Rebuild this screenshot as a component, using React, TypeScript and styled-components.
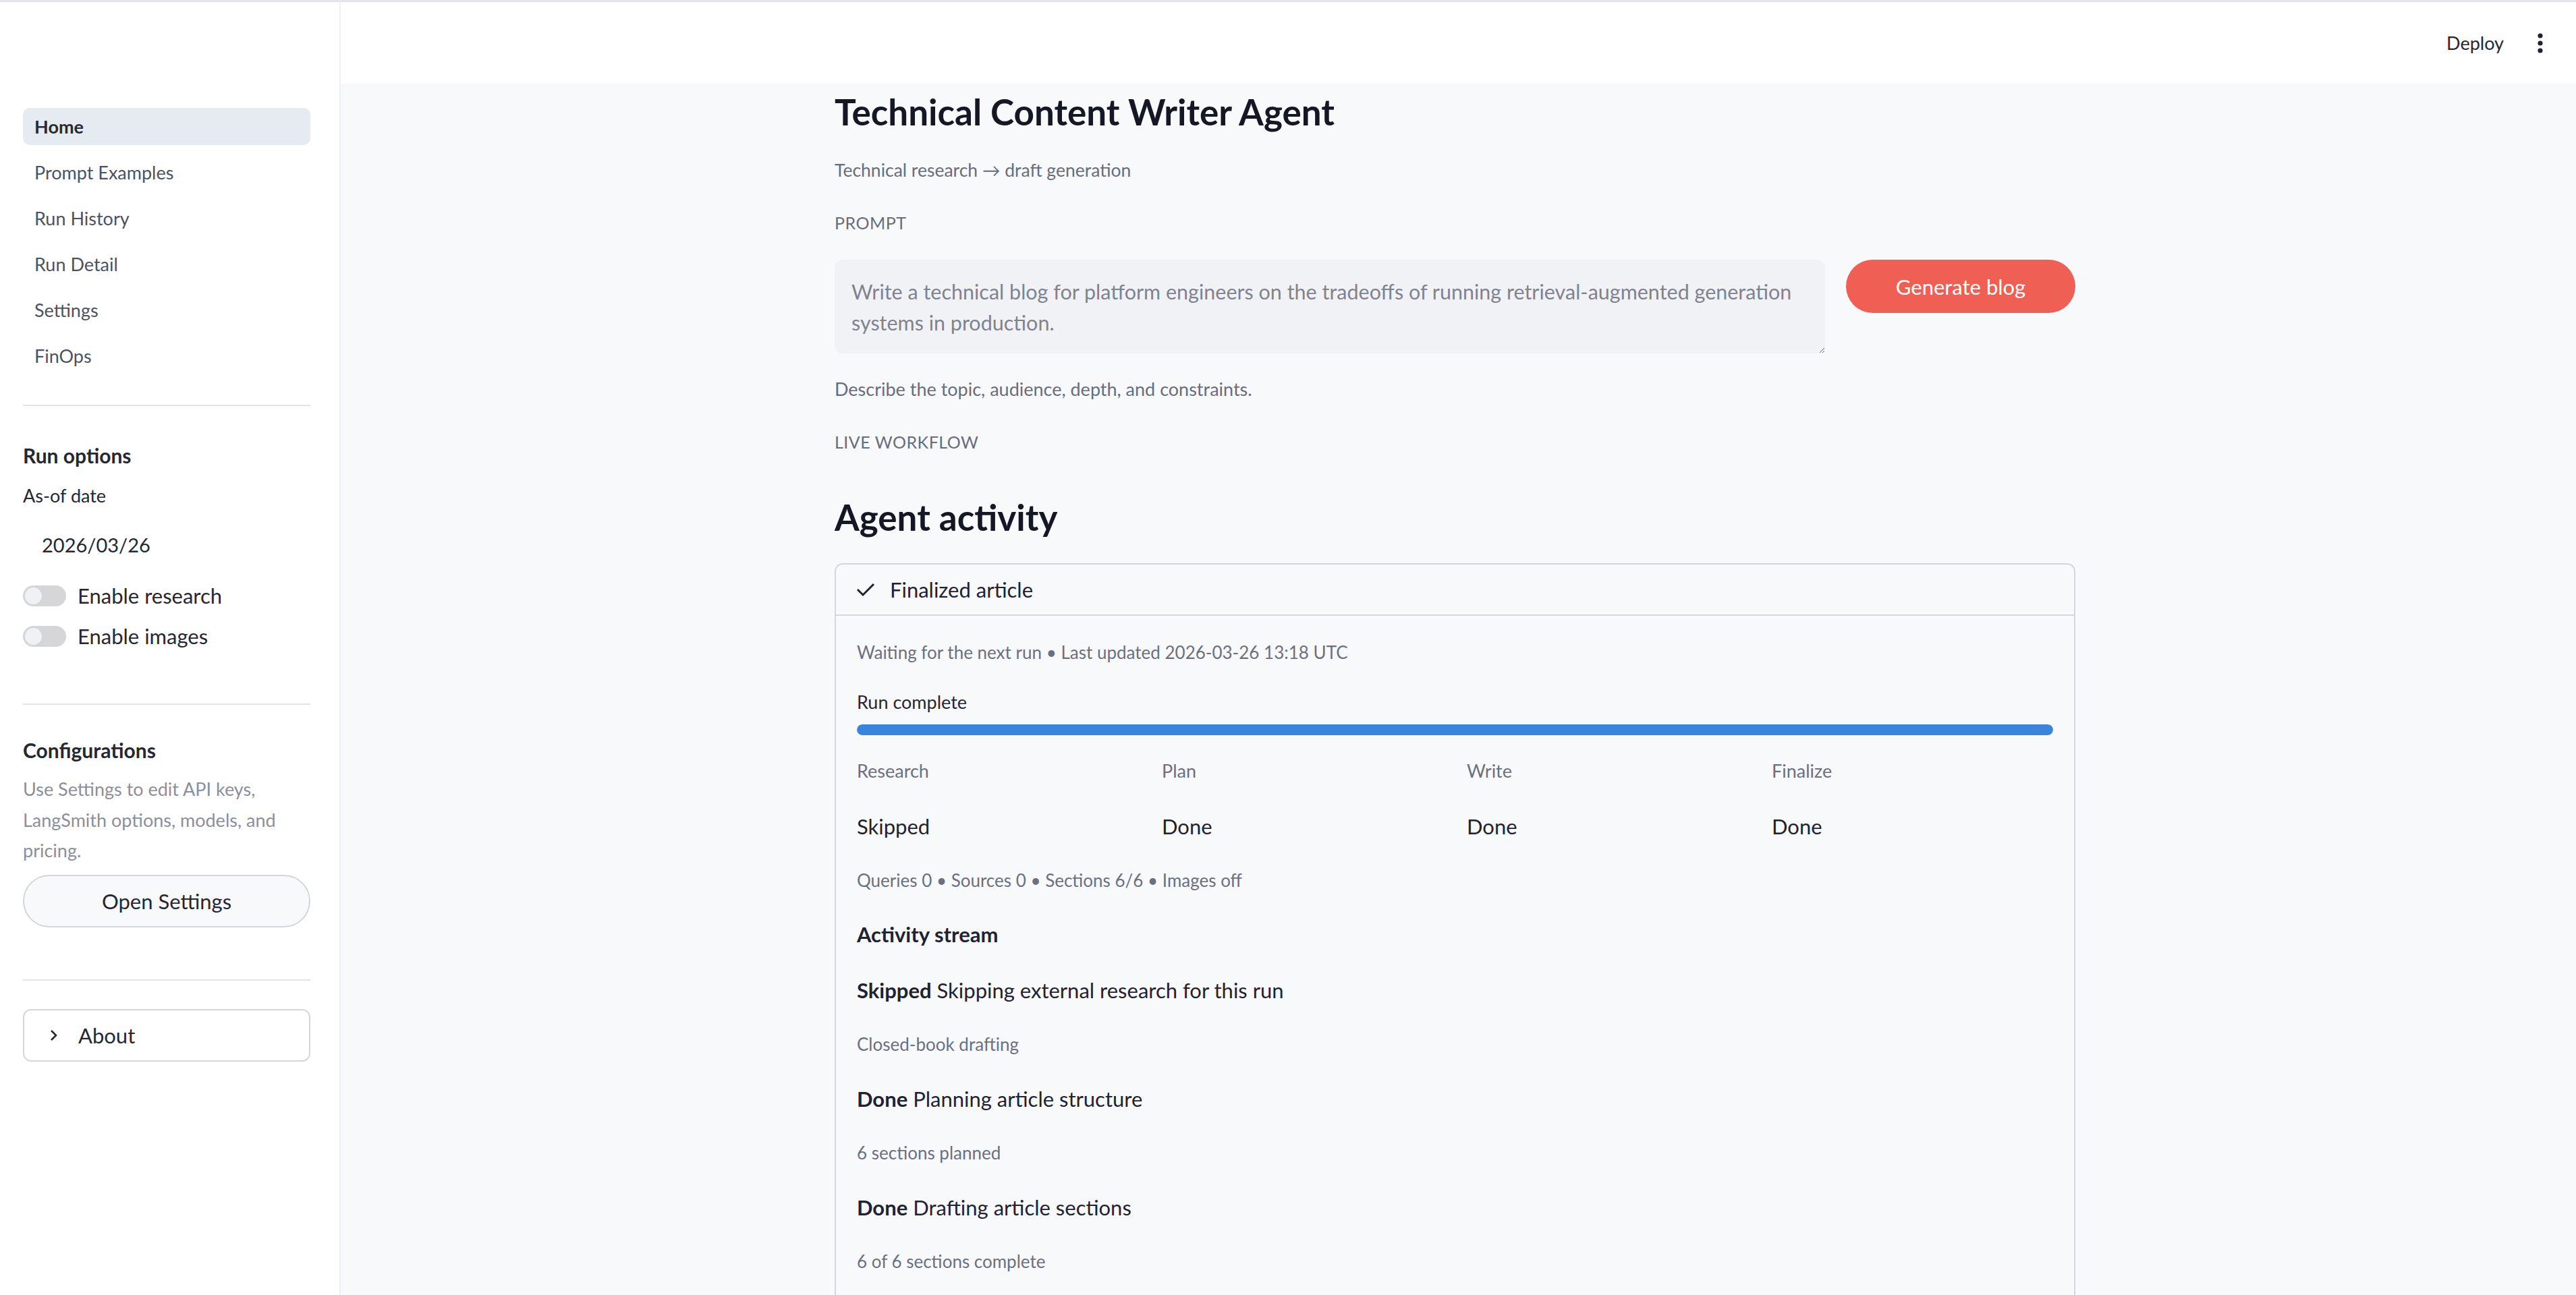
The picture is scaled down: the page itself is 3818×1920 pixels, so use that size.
import React from 'react'
import styled, { createGlobalStyle } from 'styled-components'

const GlobalStyle = createGlobalStyle`
  html, body {
    margin: 0;
    padding: 0;
  }
  body {
    font-family: Lato, "Liberation Sans", sans-serif;
    background: #f8f9fb;
    color: #1f2230;
  }
  * {
    box-sizing: border-box;
  }
`

const NAV_ITEMS = ['Home', 'Prompt Examples', 'Run History', 'Run Detail', 'Settings', 'FinOps']

const STAGES = [
  { name: 'Research', status: 'Skipped' },
  { name: 'Plan', status: 'Done' },
  { name: 'Write', status: 'Done' },
  { name: 'Finalize', status: 'Done' },
]

const ACTIVITY = [
  { tag: 'Skipped', text: 'Skipping external research for this run', note: 'Closed-book drafting' },
  { tag: 'Done', text: 'Planning article structure', note: '6 sections planned' },
  { tag: 'Done', text: 'Drafting article sections', note: '6 of 6 sections complete' },
]

const PROMPT_TEXT =
  'Write a technical blog for platform engineers on the tradeoffs of running retrieval-augmented generation systems in production.'

const App: React.FC = () => {
  return (
    <>
      <GlobalStyle />
      <Shell>
        <TopLine />
        <Frame>
          <Sidebar>
            <Nav>
              {NAV_ITEMS.map((item, i) => (
                <NavItem key={item} $active={i === 0}>
                  {item}
                </NavItem>
              ))}
            </Nav>
            <Divider $mt={45} />
            <SideHeading $mt={51}>Run options</SideHeading>
            <FieldLabel>As-of date</FieldLabel>
            <DateValue>2026/03/26</DateValue>
            <ToggleRow $mt={37}>
              <Toggle>
                <Knob />
              </Toggle>
              <ToggleLabel>Enable research</ToggleLabel>
            </ToggleRow>
            <ToggleRow $mt={28}>
              <Toggle>
                <Knob />
              </Toggle>
              <ToggleLabel>Enable images</ToggleLabel>
            </ToggleRow>
            <Divider $mt={84} />
            <SideHeading $mt={45}>Configurations</SideHeading>
            <SideNote>
              Use Settings to edit API keys,
              <br />
              LangSmith options, models, and
              <br />
              pricing.
            </SideNote>
            <PillButton>Open Settings</PillButton>
            <Divider $mt={77} />
            <AboutBox>
              <svg width="12" height="18" viewBox="0 0 12 18">
                <polyline points="2,2 9,9 2,16" fill="none" stroke="#262730" strokeWidth="2.6" />
              </svg>
              <span>About</span>
            </AboutBox>
          </Sidebar>

          <Main>
            <Header>
              <DeployLink>Deploy</DeployLink>
              <svg width="10" height="32" viewBox="0 0 10 32">
                <circle cx="5" cy="5" r="3.6" fill="#1f2230" />
                <circle cx="5" cy="16" r="3.6" fill="#1f2230" />
                <circle cx="5" cy="27" r="3.6" fill="#1f2230" />
              </svg>
            </Header>

            <Content>
              <Title $mt={6}>Technical Content Writer Agent</Title>
              <Subtitle>Technical research → draft generation</Subtitle>
              <Eyebrow $mt={40}>PROMPT</Eyebrow>
              <PromptRow>
                <PromptBox readOnly defaultValue={PROMPT_TEXT} />
                <PrimaryButton>Generate blog</PrimaryButton>
              </PromptRow>
              <Hint>Describe the topic, audience, depth, and constraints.</Hint>
              <Eyebrow $mt={40}>LIVE WORKFLOW</Eyebrow>
              <Title $mt={58}>Agent activity</Title>

              <Expander>
                <ExpanderHeader>
                  <svg width="28" height="22" viewBox="0 0 28 22">
                    <polyline points="2,11 10,19 26,3" fill="none" stroke="#1f2230" strokeWidth="3" />
                  </svg>
                  <span>Finalized article</span>
                </ExpanderHeader>
                <ExpanderBody>
                  <Caption $mt={0}>Waiting for the next run • Last updated 2026-03-26 13:18 UTC</Caption>
                  <ProgressLabel>Run complete</ProgressLabel>
                  <ProgressTrack>
                    <ProgressFill $value={100} />
                  </ProgressTrack>
                  <StageGrid>
                    {STAGES.map((stage) => (
                      <Stage key={stage.name}>
                        <StageName>{stage.name}</StageName>
                        <StageStatus>{stage.status}</StageStatus>
                      </Stage>
                    ))}
                  </StageGrid>
                  <Caption $mt={38}>Queries 0 • Sources 0 • Sections 6/6 • Images off</Caption>
                  <StreamTitle>Activity stream</StreamTitle>
                  {ACTIVITY.map((row, i) => (
                    <React.Fragment key={i}>
                      <StreamRow>
                        <b>{row.tag}</b> {row.text}
                      </StreamRow>
                      <Caption $mt={38}>{row.note}</Caption>
                    </React.Fragment>
                  ))}
                </ExpanderBody>
              </Expander>
            </Content>
          </Main>
        </Frame>
      </Shell>
    </>
  )
}

const Shell = styled.div`
  display: flex;
  flex-direction: column;
  height: 1920px;
  overflow: hidden;
`
const TopLine = styled.div`
  height: 3px;
  flex: none;
  background: #e3e4ef;
`
const Frame = styled.div`
  display: flex;
  flex: 1;
  min-height: 0;
`

/* sidebar */
const Sidebar = styled.aside`
  width: 505px;
  flex: none;
  background: #ffffff;
  border-right: 2px solid #eef0f4;
  padding: 157px 43px 0 34px;
  display: flex;
  flex-direction: column;
`
const Nav = styled.nav`
  display: flex;
  flex-direction: column;
  gap: 13px;
`
const NavItem = styled.div<{ $active?: boolean }>`
  height: 55px;
  display: flex;
  align-items: center;
  padding-left: 17px;
  border-radius: 10px;
  font-size: 27px;
  font-weight: ${(p) => (p.$active ? 700 : 400)};
  color: ${(p) => (p.$active ? '#262a36' : '#4d5261')};
  background: ${(p) => (p.$active ? '#e6eaf1' : 'transparent')};
`
const Divider = styled.hr<{ $mt: number }>`
  margin: ${(p) => p.$mt}px 0 0;
  border: none;
  border-top: 2px solid #e1e3e8;
  width: 100%;
`
const SideHeading = styled.div<{ $mt: number }>`
  margin-top: ${(p) => p.$mt}px;
  font-size: 30px;
  line-height: 44px;
  font-weight: 700;
  color: #262730;
`
const FieldLabel = styled.div`
  margin-top: 18px;
  font-size: 27px;
  line-height: 40px;
  color: #262730;
`
const DateValue = styled.div`
  margin-top: 31px;
  padding-left: 28px;
  font-size: 29px;
  line-height: 44px;
  color: #262730;
`
const ToggleRow = styled.div<{ $mt: number }>`
  margin-top: ${(p) => p.$mt}px;
  display: flex;
  align-items: center;
  gap: 17px;
  height: 32px;
`
const Toggle = styled.div`
  width: 64px;
  height: 31px;
  border-radius: 16px;
  background: #d6d6d9;
  display: flex;
  align-items: center;
  padding-left: 3px;
`
const Knob = styled.div`
  width: 25px;
  height: 25px;
  border-radius: 50%;
  background: #eff1f5;
`
const ToggleLabel = styled.span`
  font-size: 31px;
  color: #262730;
`
const SideNote = styled.div`
  margin-top: 13px;
  font-size: 27px;
  line-height: 45.5px;
  color: #8b8f9b;
`
const PillButton = styled.div`
  margin-top: 13px;
  height: 78px;
  border: 2px solid #d4d6dc;
  border-radius: 39px;
  background: #f8f9fb;
  display: flex;
  align-items: center;
  justify-content: center;
  font-size: 31px;
  color: #262730;
`
const AboutBox = styled.div`
  margin-top: 42px;
  height: 78px;
  border: 2px solid #d5d7dc;
  border-radius: 12px;
  display: flex;
  align-items: center;
  gap: 30px;
  padding-left: 38px;
  font-size: 31px;
  color: #262730;
`

/* main */
const Main = styled.main`
  flex: 1;
  display: flex;
  flex-direction: column;
  min-width: 0;
`
const Header = styled.header`
  height: 121px;
  flex: none;
  background: #ffffff;
  display: flex;
  align-items: center;
  justify-content: flex-end;
  gap: 49px;
  padding-right: 48px;
`
const DeployLink = styled.span`
  font-size: 27px;
  color: #262730;
`
const Content = styled.div`
  width: 1839px;
  margin-left: 732px;
  display: flex;
  flex-direction: column;
`
const Title = styled.h1<{ $mt: number }>`
  margin: ${(p) => p.$mt}px 0 0;
  font-size: 53px;
  line-height: 72px;
  font-weight: 700;
  color: #141824;
`
const Subtitle = styled.div`
  margin-top: 30px;
  font-size: 26.5px;
  line-height: 40px;
  color: #686d7b;
`
const Eyebrow = styled.div<{ $mt: number }>`
  margin-top: ${(p) => p.$mt}px;
  font-size: 25px;
  line-height: 36px;
  letter-spacing: 0.5px;
  color: #686d7b;
`
const PromptRow = styled.div`
  margin-top: 37px;
  display: flex;
  align-items: flex-start;
  gap: 31px;
`
const PromptBox = styled.textarea`
  flex: 1;
  height: 139px;
  border: none;
  outline: none;
  border-radius: 12px;
  background: #f0f2f6;
  padding: 24px 25px;
  font-family: Lato, "Liberation Sans", sans-serif;
  font-size: 30.5px;
  line-height: 46px;
  color: #80838f;
  resize: vertical;
  overflow: hidden;
`
const PrimaryButton = styled.div`
  width: 340px;
  height: 79px;
  flex: none;
  border-radius: 40px;
  background: #ef5f54;
  color: #ffffff;
  display: flex;
  align-items: center;
  justify-content: center;
  font-size: 31px;
`
const Hint = styled.div`
  margin-top: 33px;
  font-size: 27px;
  line-height: 40px;
  color: #686d7b;
`
const Expander = styled.section`
  margin-top: 32px;
  border: 2px solid #d5d7dc;
  border-radius: 12px;
`
const ExpanderHeader = styled.div`
  height: 76px;
  display: flex;
  align-items: center;
  gap: 22px;
  padding-left: 30px;
  border-bottom: 2px solid #d5d7dc;
  font-size: 31px;
  color: #1f2230;
`
const ExpanderBody = styled.div`
  padding: 34px 31px 160px;
  display: flex;
  flex-direction: column;
`
const Caption = styled.div<{ $mt: number }>`
  margin-top: ${(p) => p.$mt}px;
  font-size: 26px;
  line-height: 40px;
  color: #6b7080;
`
const ProgressLabel = styled.div`
  margin-top: 34px;
  font-size: 27px;
  line-height: 40px;
  color: #262730;
`
const ProgressTrack = styled.div`
  margin-top: 13px;
  height: 16px;
  border-radius: 8px;
  background: #e4e7ee;
  overflow: hidden;
`
const ProgressFill = styled.div<{ $value: number }>`
  width: ${(p) => p.$value}%;
  height: 100%;
  border-radius: 8px;
  background: #3a84dc;
`
const StageGrid = styled.div`
  margin-top: 33px;
  display: grid;
  grid-template-columns: repeat(4, 1fr);
  column-gap: 35px;
`
const Stage = styled.div`
  display: flex;
  flex-direction: column;
`
const StageName = styled.div`
  font-size: 27px;
  line-height: 40px;
  color: #6b7080;
`
const StageStatus = styled.div`
  margin-top: 40px;
  font-size: 31px;
  line-height: 44px;
  color: #1f2230;
`
const StreamTitle = styled.div`
  margin-top: 38px;
  font-size: 31px;
  line-height: 44px;
  font-weight: 700;
  color: #1f2230;
`
const StreamRow = styled.div`
  margin-top: 39px;
  font-size: 31px;
  line-height: 44px;
  color: #1f2230;

  b {
    font-weight: 700;
  }
`

export default App
